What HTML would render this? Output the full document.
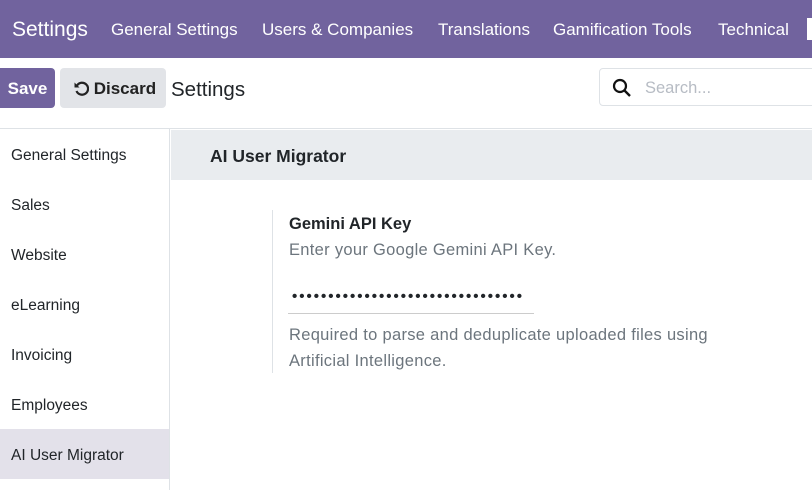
<!DOCTYPE html>
<html><head><style>
*{margin:0;padding:0;box-sizing:border-box}
body{width:812px;height:490px;overflow:hidden;background:#fff;font-family:"Liberation Sans",sans-serif;color:#212529;position:relative}
.nav{position:absolute;left:0;top:0;width:812px;height:58px;background:#71639e;color:#fff}
.nav span{position:absolute;top:20px;font-size:17px;white-space:nowrap}
.cp{position:absolute;top:58px;left:0;width:812px;height:71px;border-bottom:1px solid #dee2e6}
.btn{position:absolute;top:10px;height:40px;border-radius:4px;font-size:17px;font-weight:bold;line-height:42px}
.sb{position:absolute;left:0;top:129px;width:170px;height:361px;border-right:1px solid #dee2e6}
.sb div{height:50px;line-height:54px;padding-left:11px;font-size:15.5px}
.g{color:#6c757d;font-size:16.5px;letter-spacing:0.3px}
</style></head><body>
<div class="nav">
<span style="left:12px;font-size:21px;top:18px">Settings</span>
<span style="left:111px">General Settings</span>
<span style="left:262px">Users &amp; Companies</span>
<span style="left:438px">Translations</span>
<span style="left:553px">Gamification Tools</span>
<span style="left:718px">Technical</span>
<div style="position:absolute;left:807px;top:18px;width:5px;height:22px;background:#fff"></div>
</div>
<div class="cp">
<div class="btn" style="left:-4px;width:59px;background:#71639e;color:#fff;text-align:center;padding-left:4px">Save</div>
<div class="btn" style="left:60px;width:106px;background:#e2e4e8;color:#222;padding-left:13px"><svg width="16" height="16" viewBox="0 0 16 16" style="vertical-align:-2px"><path d="M4 5.5A6 6 0 1 1 3.5 11" fill="none" stroke="#222" stroke-width="2.2"/><path d="M1.5 2.5v5h5z" fill="#222"/></svg> Discard</div>
<div style="position:absolute;left:171px;top:20px;font-size:20.5px">Settings</div>
<div style="position:absolute;left:599px;top:10px;width:230px;height:38px;border:1px solid #dee2e6;border-radius:4px">
<svg style="position:absolute;left:12px;top:9px" width="20" height="20" viewBox="0 0 20 20"><circle cx="8" cy="8" r="6" fill="none" stroke="#111" stroke-width="2.2"/><path d="M12.5 12.5L18 18" stroke="#111" stroke-width="2.4"/></svg>
<span style="position:absolute;left:45px;top:10px;font-size:16.5px;color:#b7bcc4">Search...</span></div>
</div>
<div class="sb">
<div>General Settings</div><div>Sales</div><div>Website</div><div>eLearning</div><div>Invoicing</div><div>Employees</div><div style="background:#e3e1ea">AI User Migrator</div>
</div>
<div style="position:absolute;left:171px;top:130px;width:641px;height:50px;background:#e9ecef;font-size:17.5px;font-weight:bold;line-height:52px;padding-left:39px">AI User Migrator</div>
<div style="position:absolute;left:272px;top:210px;width:1px;height:163px;background:#dee2e6"></div>
<div style="position:absolute;left:289px;top:215px;font-size:16.5px;font-weight:bold">Gemini API Key</div>
<div class="g" style="position:absolute;left:289px;top:241px">Enter your Google Gemini API Key.</div>
<div style="position:absolute;left:292px;top:288px;font-size:15px;letter-spacing:2px;font-weight:bold;white-space:nowrap">••••••••••••••••••••••••••••••••</div>
<div style="position:absolute;left:288px;top:313px;width:246px;height:1px;background:#ccc"></div>
<div class="g" style="position:absolute;left:289px;top:322px;line-height:26px">Required to parse and deduplicate uploaded files using<br>Artificial Intelligence.</div>
</body></html>
